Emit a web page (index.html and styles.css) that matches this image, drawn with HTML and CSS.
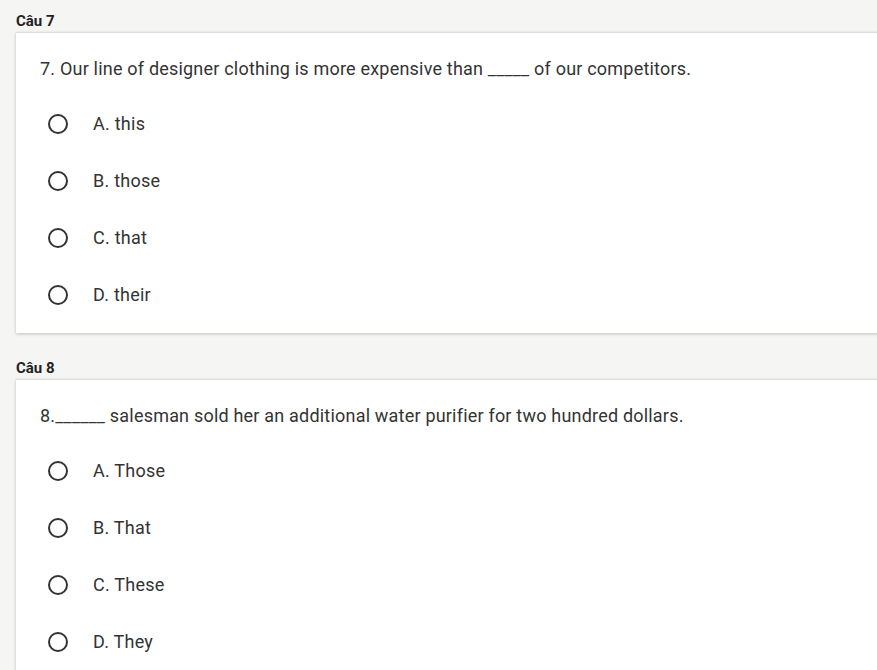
FILE: index.html
```html
<!DOCTYPE html>
<html>
<head>
<meta charset="utf-8">
<link rel="stylesheet" href="styles.css">
</head>
<body>
<div class="page">
  <section class="question">
    <div class="q-label">Câu 7</div>
    <div class="card">
      <div class="q-text">7. Our line of designer clothing is more expensive than _____ of our competitors.</div>
      <ul class="options">
        <li class="option"><span class="radio"></span><span class="opt-text">A. this</span></li>
        <li class="option"><span class="radio"></span><span class="opt-text">B. those</span></li>
        <li class="option"><span class="radio"></span><span class="opt-text">C. that</span></li>
        <li class="option"><span class="radio"></span><span class="opt-text">D. their</span></li>
      </ul>
    </div>
  </section>
  <section class="question">
    <div class="q-label">Câu 8</div>
    <div class="card">
      <div class="q-text">8.______ salesman sold her an additional water purifier for two hundred dollars.</div>
      <ul class="options">
        <li class="option"><span class="radio"></span><span class="opt-text">A. Those</span></li>
        <li class="option"><span class="radio"></span><span class="opt-text">B. That</span></li>
        <li class="option"><span class="radio"></span><span class="opt-text">C. These</span></li>
        <li class="option"><span class="radio"></span><span class="opt-text">D. They</span></li>
      </ul>
    </div>
  </section>
</div>
</body>
</html>
```

FILE: styles.css
```css
html, body {
  margin: 0;
  padding: 0;
  background: #f5f5f3;
  overflow: hidden;
}
body {
  font-family: Roboto, "Liberation Sans", sans-serif;
  color: #333;
}
.page {
  display: flex;
  flex-direction: column;
  gap: 14px;
}
.question {
  display: flex;
  flex-direction: column;
}
.q-label {
  font-size: 15px;
  font-weight: 700;
  line-height: 20px;
  padding: 11px 16px 1px;
  color: #222;
}
.card {
  margin-left: 16px;
  margin-right: -30px;
  background: #fff;
  border-top: 1px solid #dcdcd8;
  box-shadow: 0 1px 3px rgba(0,0,0,0.22);
  padding: 23px 0 10px 24px;
}
.q-text {
  font-size: 18px;
  line-height: 26px;
  letter-spacing: 0.2px;
  margin-bottom: 13px;
  color: #333;
}
.options {
  list-style: none;
  margin: 0;
  padding: 0;
}
.option {
  display: flex;
  align-items: center;
  height: 57px;
  padding-left: 8px;
}
.radio {
  width: 16px;
  height: 16px;
  border: 2px solid #333;
  border-radius: 50%;
  flex: none;
}
.opt-text {
  margin-left: 25px;
  font-size: 18px;
  letter-spacing: 0.25px;
  color: #333;
}
```
